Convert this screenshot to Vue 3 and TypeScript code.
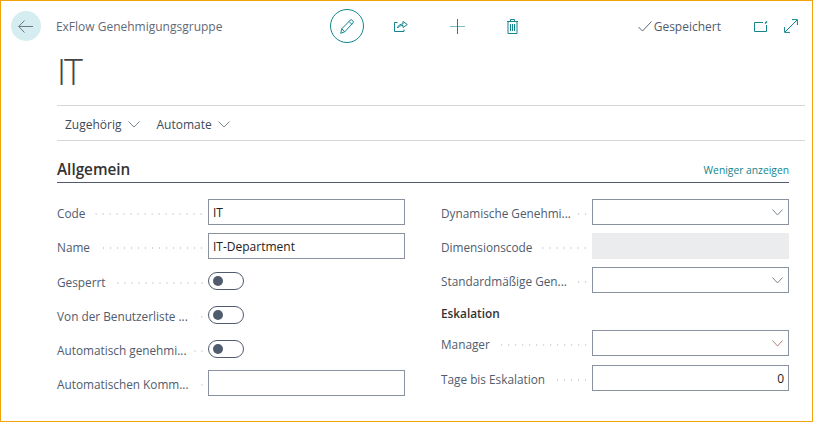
<template>
  <div class="page">
    <header class="top">
      <button class="back" aria-label="Zurück">
        <svg width="15" height="13" viewBox="0 0 15 13" fill="none" stroke="#6b7785" stroke-width="1">
          <path d="M6.500.5.700 6.500l5.800 6M.7 6.500H15" />
        </svg>
      </button>
      <div class="caption">ExFlow Genehmigungsgruppe</div>
      <div class="actions">
        <span class="edit">
          <svg width="14" height="15" viewBox="0 0 14 15" fill="none" stroke="#12858d" stroke-width="1">
            <path d="M.7 14.300 1.800 9.800 10.300 1.100a1.200 1.200 0 0 1 1.700 0l1 1a1.200 1.200 0 0 1 0 1.700L4.700 12.900zM1.800 9.800l2.900 3.100M9 2.500l3 3" />
          </svg>
        </span>
        <span class="act share">
          <svg width="14" height="12" viewBox="0 0 14 12" fill="none" stroke="#12858d" stroke-width="1">
            <path d="M3.500 2.500H.5v9h9.500V9.500M3.500 8c.5-2.500 2.500-4 5.500-4V1.500L13.300 4.500 9 7.500V5.500c-2.500 0-4.200.8-5.500 2.500z" />
          </svg>
        </span>
        <span class="act plus">
          <svg width="15" height="15" viewBox="0 0 15 15" stroke="#7dbdc1" stroke-width="1" fill="none">
            <path d="M0 7.500h15" />
            <path d="M7.500 0v15" stroke="#12858d" />
          </svg>
        </span>
        <span class="act trash">
          <svg width="11" height="15" viewBox="0 0 11 15" fill="none" stroke="#12858d" stroke-width="1">
            <path d="M0 2.500h11M3.500 2.500V.5h4v2M1 2.500v12h9v-12M3.500 5v7M5.500 5v7M7.500 5v7" />
          </svg>
        </span>
      </div>
      <div class="status">
        <svg width="14" height="11" viewBox="0 0 14 11" fill="none" stroke="#5b6675" stroke-width="1">
          <path d="M.5 6 4.500 10 13.500.5" />
        </svg>
        <span>Gespeichert</span>
      </div>
      <div class="tools">
        <svg width="14" height="11" viewBox="0 0 14 11" fill="none" stroke="#12858d" stroke-width="1">
          <path d="M9 1.500H.5v9h12V4" />
          <path d="M11 2.500 13 .5" stroke-width="1.500" />
        </svg>
        <svg width="14" height="14" viewBox="0 0 14 14" fill="none" stroke="#12858d" stroke-width="1">
          <path d="M1 13 13 1M8 .6h5.400V6M.6 8v5.400H6" />
        </svg>
      </div>
    </header>

    <h1 class="record">IT</h1>

    <nav class="menu">
      <span v-for="item in menu" :key="item" class="menu-item">
        {{ item }}
        <svg width="12" height="7" viewBox="0 0 12 7" fill="none" stroke="#7d8793" stroke-width="1">
          <path d="M.5.500 6 6 11.500.5" />
        </svg>
      </span>
    </nav>

    <section class="group">
      <div class="group-head">
        <h2>Allgemein</h2>
        <a>Weniger anzeigen</a>
      </div>
      <div class="columns">
        <div class="col">
          <div v-for="f in leftFields" :key="f.label" class="row">
            <label>{{ f.label }}</label>
            <i class="dots"></i>
            <span v-if="f.kind === 'toggle'" class="toggle"><b></b></span>
            <span v-else class="input">{{ f.value }}</span>
          </div>
        </div>
        <div class="col">
          <div v-for="f in rightFields" :key="f.label" class="row">
            <label>{{ f.label }}</label>
            <i class="dots"></i>
            <span v-if="f.kind === 'disabled'" class="input disabled"></span>
            <span v-else-if="f.kind === 'select'" class="input select">
              <svg width="11" height="7" viewBox="0 0 11 7" fill="none" stroke="#7d8793" stroke-width="1">
                <path d="M.5.500 5.500 6 10.500.5" />
              </svg>
            </span>
            <span v-else class="input">{{ f.value }}</span>
          </div>
          <h3>Eskalation</h3>
          <div class="row manager">
            <label>Manager</label>
            <i class="dots"></i>
            <span class="input select">
              <svg width="11" height="7" viewBox="0 0 11 7" fill="none" stroke="#b0827c" stroke-width="1">
                <path d="M.5.500 5.500 6 10.500.5" />
              </svg>
            </span>
          </div>
          <div class="row">
            <label>Tage bis Eskalation</label>
            <i class="dots"></i>
            <span class="input number">0</span>
          </div>
        </div>
      </div>
    </section>
  </div>
</template>

<script setup lang="ts">
type Field = { label: string; kind: 'text' | 'toggle' | 'select' | 'disabled'; value?: string }

const menu = ['Zugehörig', 'Automate']

const leftFields: Field[] = [
  { label: 'Code', kind: 'text', value: 'IT' },
  { label: 'Name', kind: 'text', value: 'IT-Department' },
  { label: 'Gesperrt', kind: 'toggle' },
  { label: 'Von der Benutzerliste ...', kind: 'toggle' },
  { label: 'Automatisch genehmi...', kind: 'toggle' },
  { label: 'Automatischen Komm...', kind: 'text' }
]

const rightFields: Field[] = [
  { label: 'Dynamische Genehmi...', kind: 'select' },
  { label: 'Dimensionscode', kind: 'disabled' },
  { label: 'Standardmäßige Gen...', kind: 'select' }
]
</script>

<style>
html,
body {
  margin: 0;
  background: #fff;
}
</style>

<style scoped>
.page {
  box-sizing: border-box;
  width: 813px;
  height: 422px;
  border: 1px solid #f0a30a;
  overflow: hidden;
  font-family: "Open Sans", "Noto Sans", sans-serif;
  font-size: 11.8px;
  color: #505c6d;
  background: #fff;
}

.top {
  display: flex;
  align-items: center;
  height: 50px;
  padding: 0 14px 0 10px;
}

.back {
  width: 30px;
  height: 30px;
  padding: 0;
  border: none;
  border-radius: 50%;
  background: #d5edf0;
  display: flex;
  align-items: center;
  justify-content: center;
}

.caption {
  width: 275px;
  margin-left: 15px;
  font-size: 12px;
  color: #5f6a78;
}

.actions {
  display: flex;
  align-items: center;
}

.edit {
  box-sizing: border-box;
  width: 34px;
  height: 34px;
  border: 1px solid #12858d;
  border-radius: 50%;
  display: flex;
  align-items: center;
  justify-content: center;
}

.act {
  display: flex;
  justify-content: center;
  width: 15px;
}

.share {
  margin-left: 30px;
}

.plus {
  margin-left: 41px;
}

.trash {
  margin-left: 40px;
}

.status {
  display: flex;
  align-items: center;
  gap: 2px;
  margin-left: 118px;
  font-size: 12px;
}

.tools {
  display: flex;
  align-items: center;
  gap: 16px;
  margin-left: 33px;
}

.record {
  margin: 0 0 0 56px;
  height: 54px;
  font-size: 36px;
  line-height: 41px;
  font-weight: 300;
  letter-spacing: -2px;
  color: #444;
}

.menu {
  display: flex;
  align-items: center;
  gap: 17px;
  height: 32px;
  margin: 0 7px 0 56px;
  padding: 2px 0 0 8px;
  border-top: 1px solid #d5d7da;
  border-bottom: 1px solid #d5d7da;
  font-size: 12px;
  color: #404b5a;
}

.menu-item {
  display: flex;
  align-items: center;
  gap: 6px;
}

.group {
  margin: 0 23px 0 56px;
}

.group-head {
  display: flex;
  align-items: center;
  justify-content: space-between;
  box-sizing: border-box;
  height: 42px;
  padding-top: 14px;
  border-bottom: 1px solid #505c6d;
}

.group-head h2 {
  margin: 0;
  font-size: 15.300px;
  font-weight: 600;
  color: #333;
}

.group-head a {
  margin-top: 2px;
  font-size: 10.300px;
  color: #12858d;
}

.columns {
  display: grid;
  grid-template-columns: 348px 348px;
  column-gap: 36px;
  padding-top: 12px;
}

.row {
  box-sizing: border-box;
  display: flex;
  align-items: flex-start;
  height: 34px;
  padding-top: 4px;
}

/* the name row sits one pixel taller in the left column */
.col:first-child .row:nth-child(2),
.manager {
  height: 35px;
}

.row label {
  line-height: 28px;
  white-space: nowrap;
}

.dots {
  flex: 1;
  height: 2px;
  margin: 14px 3px 0 7px;
  background-image: radial-gradient(circle, #cfd2d6 0.8px, transparent 1px);
  background-size: 7px 2px;
  background-position: right;
  background-repeat: repeat-x;
}

.input {
  box-sizing: border-box;
  flex: none;
  display: flex;
  align-items: center;
  width: 197px;
  height: 26px;
  padding: 0 4px;
  border: 1px solid #8a92a0;
  font-size: 12px;
  color: #222;
}

.select {
  justify-content: flex-end;
  padding-right: 5px;
}

.disabled {
  border: none;
  background: #ebecee;
}

.number {
  justify-content: flex-end;
}

.toggle {
  box-sizing: border-box;
  flex: none;
  display: flex;
  align-items: center;
  width: 36px;
  height: 18px;
  margin: 4px 161px 0 0;
  padding-left: 4px;
  border: 1px solid #505c6d;
  border-radius: 9px;
}

.toggle b {
  width: 10px;
  height: 10px;
  border-radius: 50%;
  background: #505c6d;
}

h3 {
  margin: 0;
  height: 29px;
  line-height: 32px;
  font-size: 11.800px;
  font-weight: 600;
  color: #333;
}
</style>
